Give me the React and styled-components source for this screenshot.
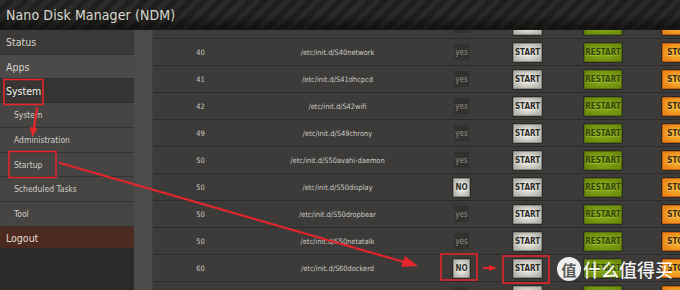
import React, { useLayoutEffect, useRef } from 'react'
import styled, { createGlobalStyle, css } from 'styled-components'

const GlobalStyle = createGlobalStyle`
  html, body {
    margin: 0;
    padding: 0;
    background: #2b2a28;
  }
  body {
    font-family: "DejaVu Sans Condensed", "Liberation Sans Narrow", Roboto, sans-serif;
    overflow: hidden;
  }
`

const menu = [
  { label: 'Status', kind: 'top', tone: 'dark' },
  { label: 'Apps', kind: 'top', tone: 'light', h: 24 },
  { label: 'System', kind: 'top', tone: 'active', h: 24 },
  { label: 'System', kind: 'sub' },
  { label: 'Administration', kind: 'sub' },
  { label: 'Startup', kind: 'sub', h: 24 },
  { label: 'Scheduled Tasks', kind: 'sub' },
  { label: 'Tool', kind: 'sub' },
]

const rows = [
  ['39', '/etc/init.d/S39syslogd', 'yes'],
  ['40', '/etc/init.d/S40network', 'yes'],
  ['41', '/etc/init.d/S41dhcpcd', 'yes'],
  ['42', '/etc/init.d/S42wifi', 'yes'],
  ['49', '/etc/init.d/S49chrony', 'yes'],
  ['50', '/etc/init.d/S50avahi-daemon', 'yes'],
  ['50', '/etc/init.d/S50display', 'NO'],
  ['50', '/etc/init.d/S50dropbear', 'yes'],
  ['50', '/etc/init.d/S50netatalk', 'yes'],
  ['60', '/etc/init.d/S60dockerd', 'NO'],
  ['70', '/etc/init.d/S70samba', 'yes'],
]

export default function App() {
  const listRef = useRef(null)

  useLayoutEffect(() => {
    if (listRef.current) listRef.current.scrollTop = 19
  }, [])

  return (
    <Page>
      <GlobalStyle />
      <Header>
        <Title>Nano Disk Manager (NDM)</Title>
      </Header>
      <Main>
        <Sidebar>
          {menu.map((m, i) => (
            <MenuItem key={i} $kind={m.kind} $tone={m.tone} $h={m.h}>
              {m.label}
            </MenuItem>
          ))}
          <Logout>Logout</Logout>
          <SidebarFill />
        </Sidebar>
        <Gutter />
        <Content ref={listRef}>
          {rows.map(([num, path, on], i) => (
            <Row key={i}>
              <TextCell>{num}</TextCell>
              <TextCell>{path}</TextCell>
              <BtnCell>
                <Btn $kind={on === 'NO' ? 'no' : 'yes'}>{on}</Btn>
              </BtnCell>
              <BtnCell>
                <Btn $kind="start">START</Btn>
              </BtnCell>
              <BtnCell>
                <Btn $kind="restart">RESTART</Btn>
              </BtnCell>
              <BtnCell>
                <Btn $kind="stop">STOP</Btn>
              </BtnCell>
            </Row>
          ))}
        </Content>
      </Main>

      <Marks width="680" height="290" viewBox="0 0 680 290">
        <g fill="none" stroke="#e3262b" strokeWidth="1.6">
          <rect x="4" y="79.5" width="39" height="25" />
          <rect x="9" y="151.5" width="47" height="26" />
          <rect x="441" y="254" width="36" height="26" />
          <rect x="503" y="256" width="46" height="27" />
        </g>
        <g stroke="#e3262b" strokeWidth="2.2" strokeLinecap="round">
          <line x1="37" y1="108" x2="34" y2="128" />
          <line x1="60" y1="163" x2="404" y2="262" />
          <line x1="484" y1="268" x2="490" y2="268" />
        </g>
        <g fill="#e3262b">
          <polygon points="32.5,137 29.5,127 37.5,128" />
          <polygon points="418,266 401,267 405,256" />
          <polygon points="497,268 489,265 489,271" />
        </g>
      </Marks>

      <Watermark>
        <Badge>值</Badge>
        <Brand>什么值得买</Brand>
      </Watermark>
    </Page>
  )
}

const Page = styled.div`
  position: relative;
  width: 680px;
  height: 290px;
  display: flex;
  flex-direction: column;
  overflow: hidden;
`

const Header = styled.div`
  height: 30px;
  flex: none;
  display: flex;
  align-items: center;
  padding-left: 6px;
  background:
    linear-gradient(to bottom, rgba(0,0,0,0) 50%, rgba(0,0,0,0.5) 100%),
    repeating-linear-gradient(135deg, #2b2a28 0 5px, #201f1d 5px 10.6px);
  border-bottom: 1px solid #1a1918;
  box-sizing: border-box;
`

const Title = styled.h1`
  margin: 0;
  font-size: 14px;
  font-weight: normal;
  color: #d9d8d0;
  letter-spacing: 0.1px;
`

const Main = styled.div`
  flex: 1;
  display: flex;
  min-height: 0;
`

const Sidebar = styled.nav`
  width: 134px;
  flex: none;
  display: flex;
  flex-direction: column;
`

const tones = {
  dark: '#3a3937',
  light: '#4b4a48',
  active: '#363533',
}

const MenuItem = styled.div`
  height: ${p => p.$h || 25}px;
  flex: none;
  display: flex;
  align-items: center;
  box-sizing: border-box;
  border-bottom: 1px solid #2f2e2c;
  ${p => p.$kind === 'top' ? css`
    padding-left: 6px;
    font-size: 10.5px;
    color: ${p.$tone === 'active' ? '#f2f2ec' : '#d6d5cd'};
    background: ${tones[p.$tone]};
  ` : css`
    padding-left: 14px;
    font-size: 8.5px;
    color: #cfcec6;
    background: #464543;
    border-bottom-color: #343331;
  `}
`

const Logout = styled.div`
  height: 21px;
  flex: none;
  display: flex;
  align-items: center;
  padding-left: 6px;
  font-size: 10.5px;
  color: #e2ddd6;
  background: #4d2a1f;
`

const SidebarFill = styled.div`
  flex: 1;
  background: #2b2a28;
`

const Gutter = styled.div`
  width: 18px;
  flex: none;
  background: #4c4b49;
`

const Content = styled.div`
  flex: 1;
  overflow: hidden;
  background: #3b3a38;
  border-left: 1px solid #3f3e3c;
`

const Row = styled.div`
  display: grid;
  grid-template-columns: 95px 179px 69px 63px 88px 62px;
  height: 27px;
  box-sizing: border-box;
  border-top: 1px solid #2c2b29;
  background: #3c3b39;
`

const TextCell = styled.div`
  display: flex;
  align-items: center;
  justify-content: center;
  font-size: 7.4px;
  color: #cbcac2;
`

const BtnCell = styled.div`
  display: flex;
  justify-content: center;
  align-items: flex-start;
  padding-top: 4px;
`

const btnKinds = {
  yes: css`
    width: 17px;
    height: 18px;
    background: #32312f;
    color: #92918c;
    border-color: #3a3937;
    box-shadow: none;
    font-size: 8px;
    font-weight: normal;
    text-shadow: none;
  `,
  no: css`
    width: 17px;
    height: 19px;
    background: radial-gradient(ellipse at center, #edece5 20%, #a9a8a1 100%);
    color: #33322f;
    border-color: #8c8b86;
  `,
  start: css`
    width: 29px;
    height: 19px;
    background: radial-gradient(ellipse at center, #ecebe4 20%, #a7a69f 100%);
    color: #2c2b29;
    border-color: #8c8b86;
  `,
  restart: css`
    width: 38px;
    height: 19px;
    background: radial-gradient(ellipse at center, #82a416 30%, #67850b 100%);
    color: #34440a;
    border-color: #55700a;
    text-shadow: 0 1px 0 rgba(200, 230, 90, 0.45);
  `,
  stop: css`
    width: 32px;
    height: 19px;
    background: radial-gradient(ellipse at center, #f5b02c 25%, #e57a14 100%);
    color: #3a2608;
    border-color: #c8600c;
  `,
}

const Btn = styled.div`
  box-sizing: border-box;
  border: 1px solid;
  border-radius: 1px;
  box-shadow: 0 0 0 1px rgba(0, 0, 0, 0.3);
  display: flex;
  align-items: center;
  justify-content: center;
  font-size: 8px;
  font-weight: bold;
  text-shadow: 0 1px 0 rgba(255, 255, 255, 0.35);
  overflow: hidden;
  white-space: nowrap;
  ${p => btnKinds[p.$kind]}
`

const Marks = styled.svg`
  position: absolute;
  left: 0;
  top: 0;
  pointer-events: none;
`

const Watermark = styled.div`
  position: absolute;
  left: 557px;
  top: 257px;
  display: flex;
  align-items: center;
  gap: 2px;
  pointer-events: none;
`

const Badge = styled.div`
  width: 24px;
  height: 24px;
  border-radius: 50%;
  background: rgba(255, 255, 255, 0.92);
  color: #5a5956;
  font-family: "Noto Sans CJK SC", sans-serif;
  font-size: 15px;
  font-weight: bold;
  display: flex;
  align-items: center;
  justify-content: center;
`

const Brand = styled.div`
  font-family: "Noto Sans CJK SC", sans-serif;
  font-size: 18px;
  font-weight: 500;
  color: rgba(255, 255, 255, 0.95);
  line-height: 1;
`
